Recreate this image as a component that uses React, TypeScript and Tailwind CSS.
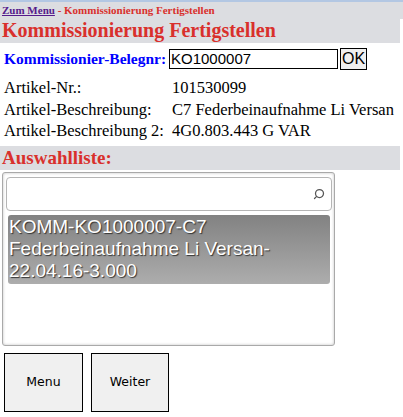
import { Search } from "lucide-react";

const rows = [
  { label: "Artikel-Nr.:", value: "101530099" },
  { label: "Artikel-Beschreibung:", value: "C7 Federbeinaufnahme Li Versan" },
  { label: "Artikel-Beschreibung 2:", value: "4G0.803.443 G VAR" },
];

export default function App() {
  return (
    <div className="w-[403px] h-[417px] bg-white overflow-hidden font-['Liberation_Serif',serif]">
      <div className="h-[2px] bg-[#b3c7e3]" />
      <div className="h-[17px] bg-[#dcdde1] pl-[2px] text-[11px] font-bold leading-[17px]">
        <a href="#" className="text-[#551a8b] underline">
          Zum Menu
        </a>
        <span className="text-[#d9302c]"> - Kommissionierung Fertigstellen</span>
      </div>
      <div className="w-[400px] h-[24px] bg-[#dcdde1] pl-[2px] text-[20px] font-bold leading-[22px] text-[#d9302c]">
        Kommissionierung Fertigstellen
      </div>

      <div className="flex items-center h-[30px] pl-[4px] pt-[2px]">
        <span className="w-[165px] text-[15.5px] font-bold text-[#0000ff] whitespace-nowrap">
          Kommissionier-Belegnr:
        </span>
        <input
          defaultValue="KO1000007"
          className="w-[169px] h-[20px] border border-black px-[1px] text-[15px] font-['Liberation_Sans',sans-serif] outline-none"
        />
        <button className="ml-[2px] w-[27px] h-[22px] border border-black bg-[#efefef] text-[16px] font-['Liberation_Sans',sans-serif] leading-none">
          OK
        </button>
      </div>

      <div className="pl-[4px] pt-[5px] text-[16.5px] text-black">
        {rows.map((r) => (
          <div key={r.label} className="flex h-[21.5px] items-center whitespace-nowrap">
            <span className="w-[168px]">{r.label}</span>
            <span>{r.value}</span>
          </div>
        ))}
      </div>

      <div className="mt-[3px] w-[400px] h-[24px] bg-[#dcdde1] pl-[2px] text-[19px] font-bold leading-[24px] text-[#d9302c]">
        Auswahlliste:
      </div>

      <div className="ml-[2px] mt-[2px] w-[333px] h-[174px] rounded-[3px] border border-[#a9a9a9] shadow-[inset_0_0_3px_rgba(0,0,0,0.25)] px-[3px] pt-[4px]">
        <div className="relative h-[34px] w-[326px] rounded-[4px] border border-[#b5b5b5] bg-white">
          <Search
            className="absolute right-[6px] top-[10px] w-[12px] h-[12px] text-[#555] -scale-x-100"
            strokeWidth={2.5}
          />
        </div>
        <div className="mt-[4px] ml-[2px] w-[322px] h-[69px] rounded-[3px] bg-gradient-to-b from-[#828282] to-[#adadad] px-[1px] pt-[1px] font-['Liberation_Sans',sans-serif] text-[19px] leading-[22px] text-white [text-shadow:1px_1px_1px_#333] whitespace-nowrap">
          <div>KOMM-KO1000007-C7</div>
          <div>Federbeinaufnahme Li Versan-</div>
          <div>22.04.16-3.000</div>
        </div>
      </div>

      <div className="flex gap-[8px] pl-[4px] mt-[7px]">
        <button className="w-[79px] h-[59px] border border-black bg-[#f0f0f0] font-['DejaVu_Sans',sans-serif] text-[12.5px] text-black">
          Menu
        </button>
        <button className="w-[78px] h-[59px] border border-black bg-[#f0f0f0] font-['DejaVu_Sans',sans-serif] text-[12.5px] text-black">
          Weiter
        </button>
      </div>
    </div>
  );
}
